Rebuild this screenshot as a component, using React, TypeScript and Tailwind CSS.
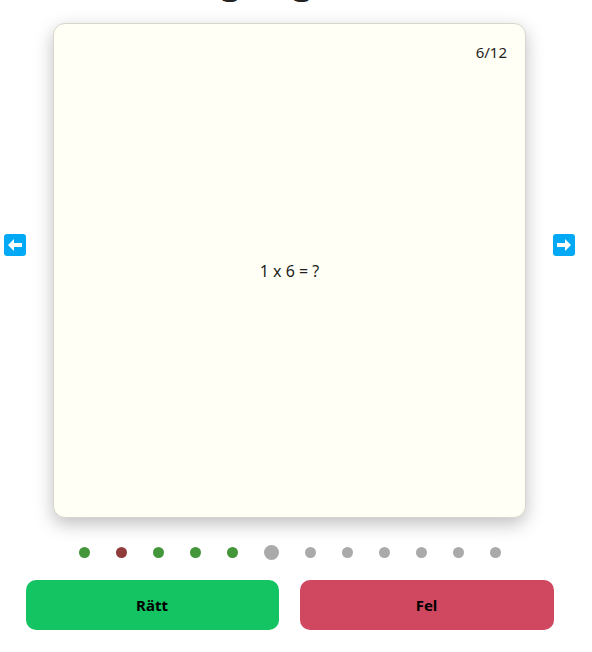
type DotState = "right" | "wrong" | "current" | "todo";

const dots: DotState[] = [
  "right",
  "wrong",
  "right",
  "right",
  "right",
  "current",
  "todo",
  "todo",
  "todo",
  "todo",
  "todo",
  "todo",
];

const ArrowIcon = ({ dir }: { dir: "left" | "right" }) => (
  <svg width="22" height="22" viewBox="0 0 22 22">
    <rect x="0" y="0" width="22" height="22" rx="3" fill="#03a9f4" />
    <path
      d="M4 11 L10 5 L10 9 L18 9 L18 13 L10 13 L10 17 Z"
      fill="#ffffff"
      transform={dir === "right" ? "translate(22 0) scale(-1 1)" : undefined}
    />
  </svg>
);

const Dot = ({ state }: { state: DotState }) => {
  if (state === "current") {
    return <span className="w-[15px] h-[15px] rounded-full bg-[#aaaaaa]" />;
  }
  const color =
    state === "right"
      ? "bg-[#43973a]"
      : state === "wrong"
        ? "bg-[#903c3a]"
        : "bg-[#aaaaaa]";
  return <span className={`w-[11px] h-[11px] rounded-full ${color}`} />;
};

export default function App() {
  return (
    <div
      className="w-[592px] h-[652px] overflow-hidden bg-white text-[#1f1f1f] pr-[13px]"
      style={{ fontFamily: '"Noto Sans", "Open Sans", sans-serif' }}
    >
      {/* page is scrolled: only the title's descenders peek in */}
      <div className="h-[7px] overflow-hidden flex justify-center">
        <h1 className="text-[40px] leading-none font-normal -mt-[43px] -ml-[6px] text-[#222]">
          gånger
        </h1>
      </div>

      <div className="flex justify-center items-start gap-[27px] mt-[16px]">
        <button className="mt-[211px]">
          <ArrowIcon dir="left" />
        </button>
        <div className="relative w-[473px] h-[495px] rounded-[12px] border border-[#d8d6ca] bg-[#fffff5] shadow-[0_6px_18px_rgba(0,0,0,0.25)] flex items-center justify-center">
          <span className="absolute top-[17px] right-[18px] text-[15px]">
            6/12
          </span>
          <p className="text-[16px] mt-[1px] whitespace-pre">1 x 6 = ?</p>
        </div>
        <button className="mt-[211px]">
          <ArrowIcon dir="right" />
        </button>
      </div>

      <div className="flex justify-center items-center gap-[26px] h-[15px] mt-[27px]">
        {dots.map((d, i) => (
          <Dot state={d} key={i.toString()} />
        ))}
      </div>

      <div className="w-[528px] mx-auto mt-[20px] flex gap-[21px]">
        <button className="w-[253px] h-[50px] rounded-[10px] bg-[#14c463] text-black font-bold text-[15px]">
          Rätt
        </button>
        <button className="w-[254px] h-[50px] rounded-[10px] bg-[#cf4860] text-black font-bold text-[15px]">
          Fel
        </button>
      </div>
    </div>
  );
}
